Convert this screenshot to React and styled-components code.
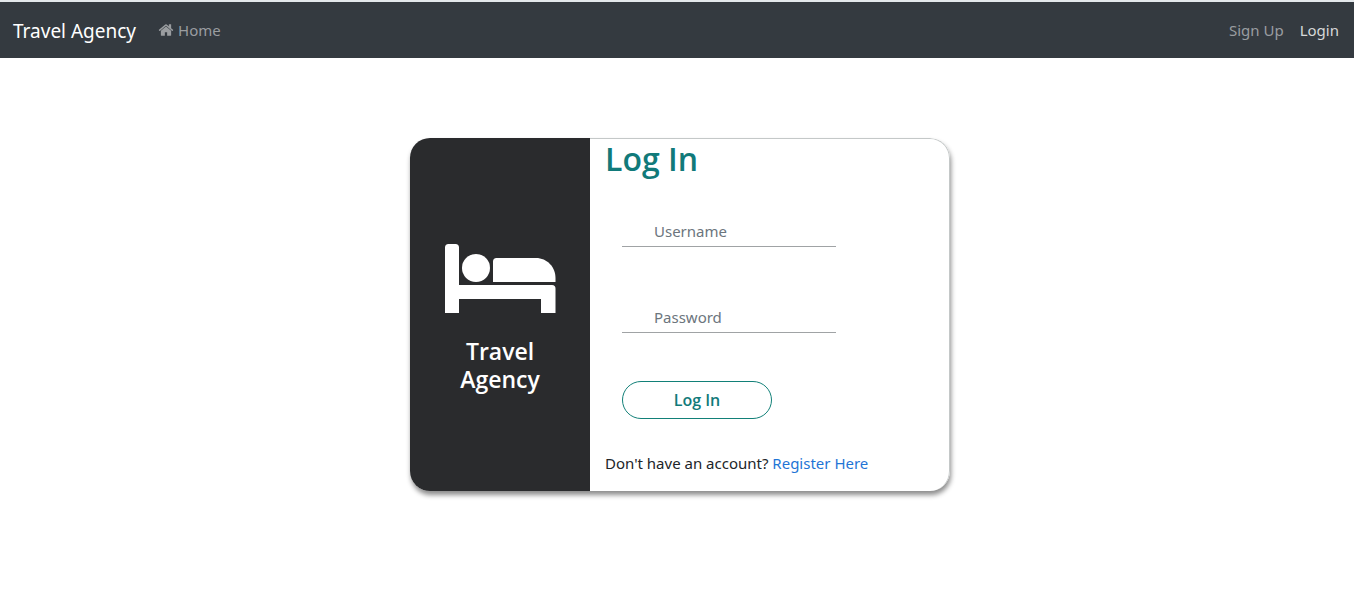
import React from "react";
import styled, { createGlobalStyle } from "styled-components";

const headingFont = '"Segoe UI", "Open Sans", sans-serif';

const GlobalStyle = createGlobalStyle`
  *, *::before, *::after { box-sizing: border-box; }
  body {
    margin: 0;
    background: #fff;
    color: #212529;
    font-family: "Segoe UI", "Noto Sans", "Open Sans", sans-serif;
    font-size: 15px;
    line-height: 24px;
  }
`;

const Navbar = styled.nav`
  display: flex;
  align-items: center;
  height: 58px;
  padding: 0 15px 0 13px;
  border-top: 2px solid #e3e8eb;
  background: #343a40;
`;

const Brand = styled.a`
  margin-right: 22px;
  padding-top: 2px;
  color: #fff;
  font-size: 19px;
  line-height: 30px;
  text-decoration: none;
`;

const NavGroup = styled.div`
  display: flex;
  gap: 16px;
  margin-left: ${(p) => (p.$end ? "auto" : "0")};
`;

const NavLink = styled.a`
  display: flex;
  align-items: center;
  gap: 4px;
  color: ${(p) => (p.$active ? "#d6d8d9" : "#9a9da0")};
  text-decoration: none;
`;

const Main = styled.main`
  display: flex;
  justify-content: center;
  padding: 80px 16px 80px 22px;
`;

const Card = styled.section`
  display: flex;
  width: 100%;
  max-width: 540px;
  border-radius: 20px;
  overflow: hidden;
  background: #fff;
  box-shadow: 1px 4px 5px rgba(0, 0, 0, 0.45);
`;

const Aside = styled.div`
  display: flex;
  flex: 0 0 calc(100% / 3);
  flex-direction: column;
  align-items: center;
  justify-content: center;
  gap: 24px;
  padding: 8px 32px 0;
  background: #2a2b2d;
  color: #fff;
`;

const AsideTitle = styled.h2`
  margin: 0;
  font-family: ${headingFont};
  font-size: 23px;
  font-weight: 600;
  line-height: 28px;
  text-align: center;
`;

const Content = styled.div`
  flex: 1;
  min-width: 0;
  padding: 2px 15px 16px;
  border: 1px solid #c4c8c8;
  border-width: 1px 1px 0 0;
  border-radius: 0 20px 20px 0;
`;

const Title = styled.h1`
  margin: 0;
  color: #117a7a;
  font-family: ${headingFont};
  font-size: 32px;
  font-weight: 600;
  line-height: 36px;
`;

const Form = styled.form`
  display: flex;
  flex-direction: column;
  align-items: flex-start;
  gap: 48px;
  padding: 32px 17px;
`;

const Field = styled.input`
  width: 214px;
  height: 38px;
  padding: 10px 32px 4px;
  border: 0;
  border-bottom: 1px solid #a0a3a5;
  border-radius: 0;
  outline: 0;
  background: transparent;
  color: #495057;
  font: inherit;
  &::placeholder {
    color: #6c757d;
    opacity: 1;
  }
`;

const SubmitButton = styled.button`
  width: 150px;
  height: 38px;
  border: 1px solid #128078;
  border-radius: 20px;
  background: #fff;
  color: #117a7a;
  font-family: ${headingFont};
  font-size: 16px;
  font-weight: 600;
  line-height: 24px;
  cursor: pointer;
`;

const Note = styled.p`
  margin: 0;
`;

const TextLink = styled.a`
  color: #1f75d6;
  text-decoration: none;
`;

const HomeIcon = () => (
  <svg width="16" height="16" viewBox="0 0 1792 1792" fill="currentColor" aria-hidden="true">
    <path d="M1472 992v480q0 26-19 45t-45 19h-384v-384h-256v384h-384q-26 0-45-19t-19-45v-480q0-1 .5-3t.5-3l575-474 575 474q1 2 1 6zm223-69l-62 74q-8 9-21 11h-3q-13 0-21-7l-692-577-692 577q-12 8-24 7-13-2-21-11l-62-74q-8-10-7-23.5t11-21.5l719-599q32-26 76-26t76 26l244 204v-195q0-14 9-23t23-9h192q14 0 23 9t9 23v408l219 182q10 8 11 21.5t-7 23.5z" />
  </svg>
);

const BedIcon = () => (
  <svg width="112" height="69" viewBox="0 0 112 69" fill="#fff" aria-hidden="true">
    <path d="M1 69V3.500Q1 0 4.500 0H11.500Q15 0 15 3.500V41H108Q111.500 41 111.500 44.500V69H97V55H15V69Z" />
    <circle cx="32" cy="24" r="14" />
    <path d="M49 38V17.500Q49 14 52.500 14H92C103 14 111.500 23 111.500 34V38Z" />
  </svg>
);

export default function App() {
  return (
    <>
      <GlobalStyle />
      <Navbar>
        <Brand href="#">Travel Agency</Brand>
        <NavGroup>
          <NavLink href="#">
            <HomeIcon />
            Home
          </NavLink>
        </NavGroup>
        <NavGroup $end>
          <NavLink href="#signup">Sign Up</NavLink>
          <NavLink href="#login" $active>Login</NavLink>
        </NavGroup>
      </Navbar>
      <Main>
        <Card>
          <Aside>
            <BedIcon />
            <AsideTitle>Travel Agency</AsideTitle>
          </Aside>
          <Content>
            <Title>Log In</Title>
            <Form onSubmit={(e) => e.preventDefault()}>
              <Field type="text" name="username" placeholder="Username" aria-label="Username" />
              <Field type="password" name="password" placeholder="Password" aria-label="Password" />
              <SubmitButton type="submit">Log In</SubmitButton>
            </Form>
            <Note>
              Don't have an account? <TextLink href="#register">Register Here</TextLink>
            </Note>
          </Content>
        </Card>
      </Main>
    </>
  );
}
